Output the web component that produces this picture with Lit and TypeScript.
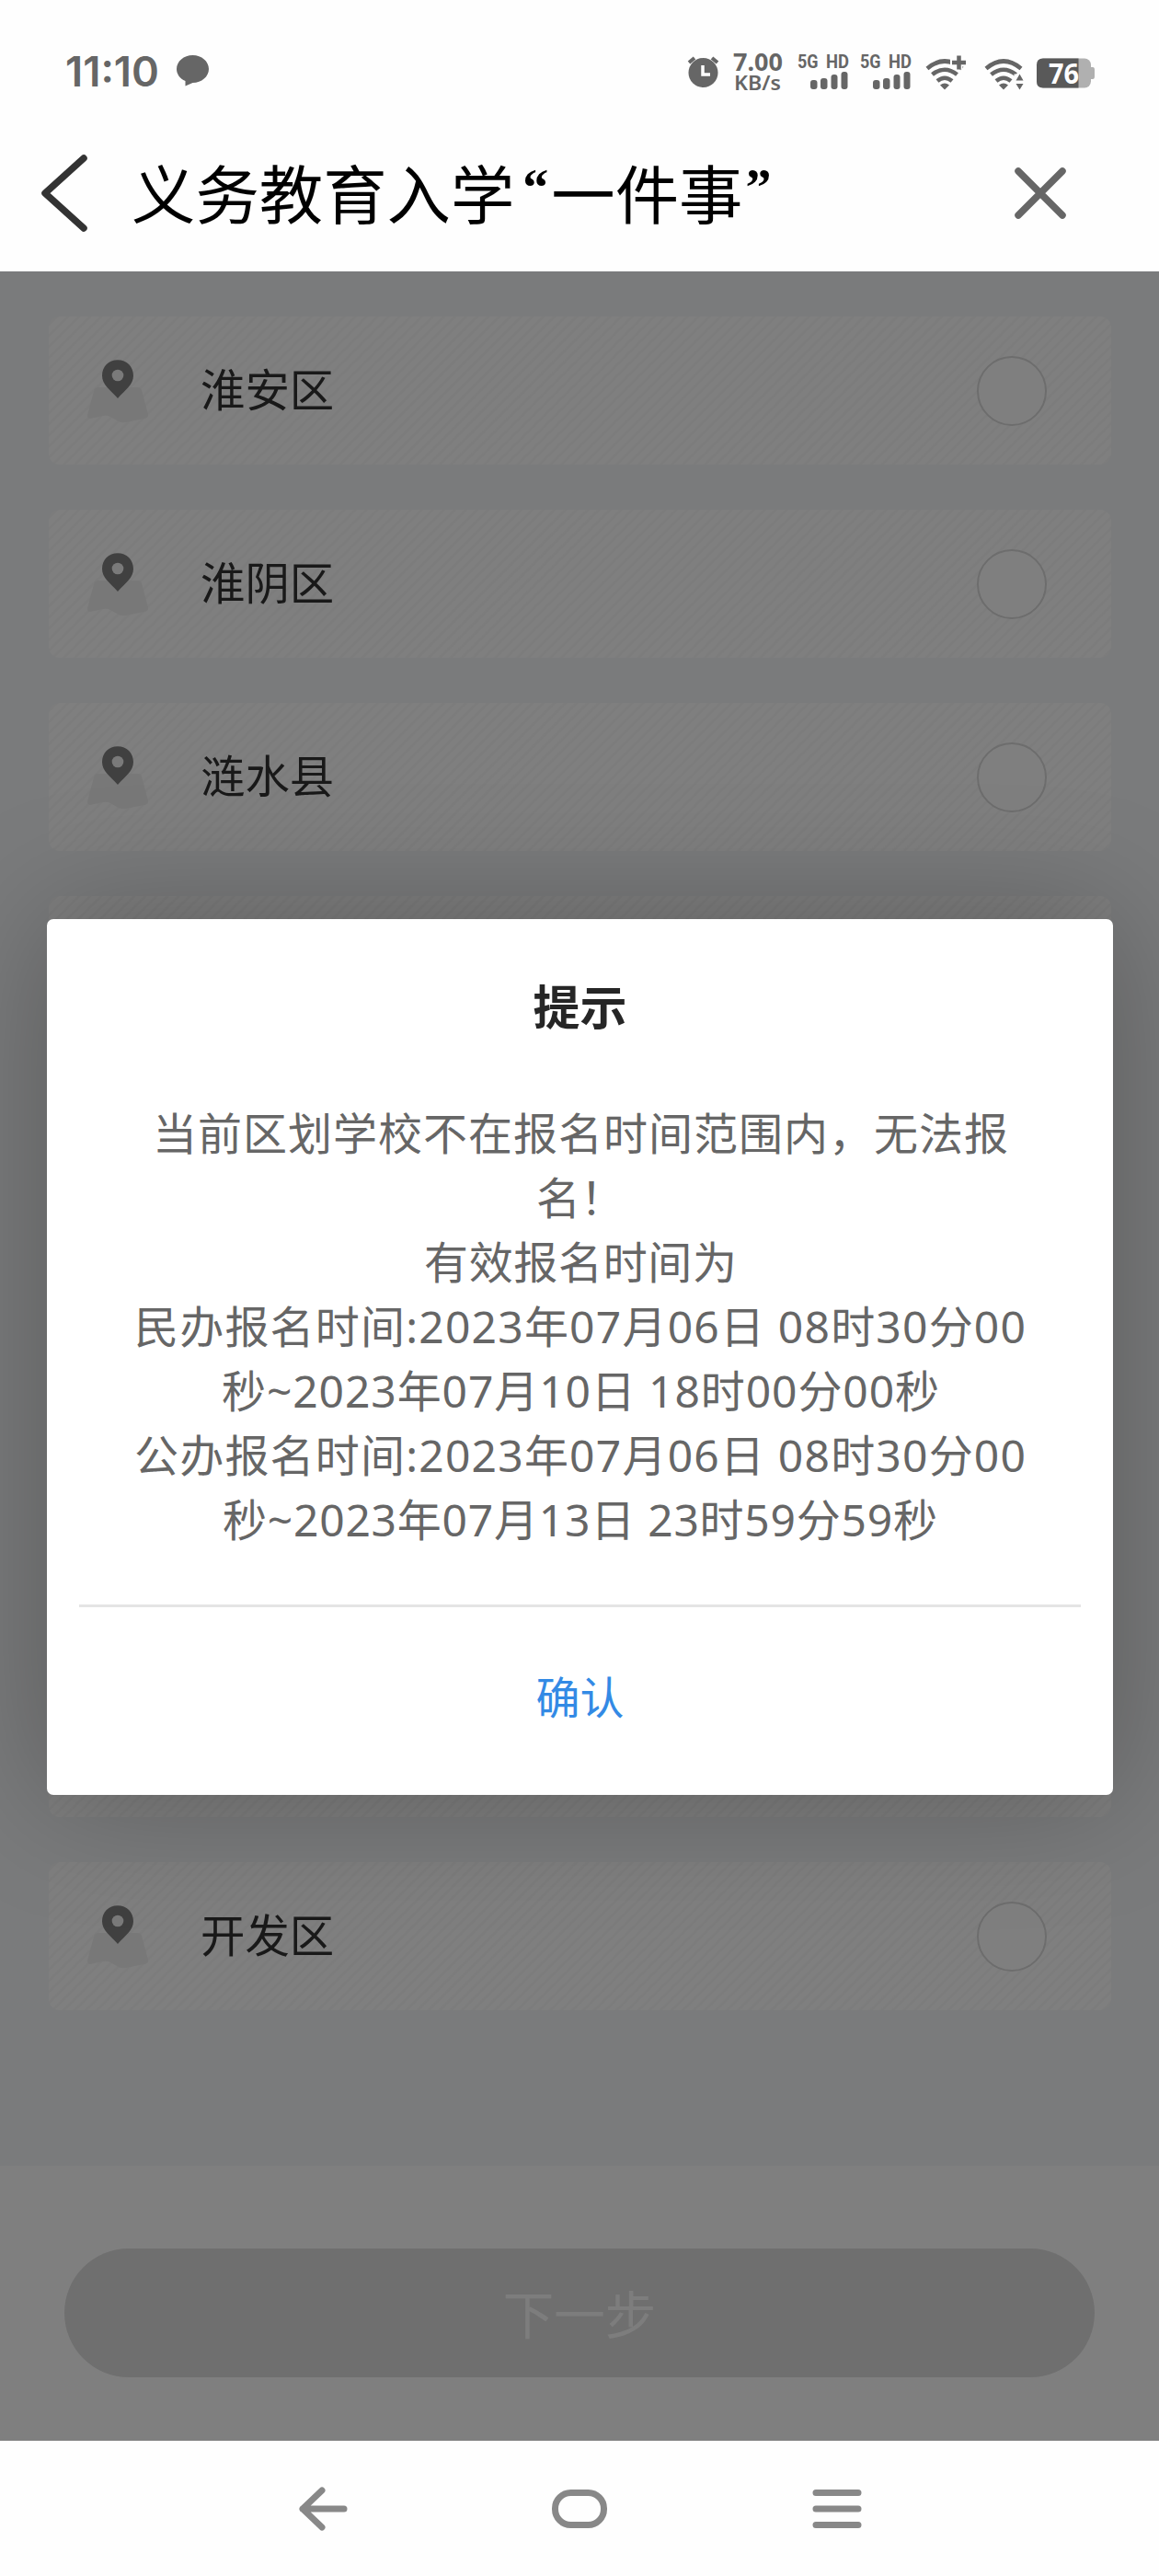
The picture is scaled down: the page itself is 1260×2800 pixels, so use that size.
import { LitElement, html, css, svg, nothing } from "lit";
import { customElement, property } from "lit/decorators.js";

const FONT = css`"Noto Sans", "Noto Sans CJK SC", sans-serif`;

@customElement("signal-meter")
class SignalMeter extends LitElement {
  static styles = css`
    :host { display: block; width: 58px; height: 42px; }
    .label { font: 700 21px/21px "Roboto", sans-serif; fill: #666; }
    svg { display: block; overflow: visible; }
  `;
  render() {
    return html`<svg width="58" height="42" viewBox="0 0 58 42" fill="#666">
      <text class="label" x="0" y="15.5" textLength="22.5" lengthAdjust="spacingAndGlyphs">5G</text>
      <text class="label" x="31" y="15.5" textLength="25" lengthAdjust="spacingAndGlyphs">HD</text>
      <rect x="14" y="29" width="7.5" height="10" rx="3" />
      <rect x="25" y="27" width="7.5" height="12" rx="3" />
      <rect x="36.5" y="23" width="7" height="16" rx="3" />
      <rect x="47.5" y="20" width="7" height="19" rx="3" />
    </svg>`;
  }
}

@customElement("district-row")
class DistrictRow extends LitElement {
  @property() name = "";
  static styles = css`
    :host { display: block; }
    .card {
      display: flex; align-items: center; box-sizing: border-box; height: 161px;
      padding: 0 70px 0 41px; border-radius: 12px;
      background: repeating-linear-gradient(135deg, #fff 0 4px, #f8f8f8 6px 7px, #fff 8.5px);
    }
    .pin { flex: none; width: 68px; height: 84px; margin-top: 4px; }
    .name {
      flex: 1; padding-left: 56px; white-space: nowrap; color: #333;
      font: 400 48.4px/60px ${FONT}; margin-top: -3px;
    }
    .radio { box-sizing: border-box; width: 76px; height: 76px; border: 2px solid #dadada; border-radius: 50%; background: #fff; }
  `;
  render() {
    return html`<div class="card">
      ${this.name
        ? html`<svg class="pin" viewBox="0 0 68 84">
              <path d="M12 36h44q3 0 4 3l7 26q1 4-4 5l-20 4q-6 1-10-2l-7-4q-4-2-8-1l-14 3q-3 0-3-4l7-26q1-4 4-4Z" fill="#f1f1f1" />
              <path d="M34 6.300C24.200 6.300 17 13.500 17 23.200c0 10 8.500 15 17 24.700 8.500-9.700 17-14.700 17-24.700C51 13.500 43.700 6.300 34 6.300Z" fill="#808080" />
              <circle cx="34" cy="23" r="6.300" fill="#f4f4f4" />
            </svg>
            <div class="name">${this.name}</div>
            <div class="radio"></div>`
        : nothing}
    </div>`;
  }
}

@customElement("app-root")
class AppRoot extends LitElement {
  // Rows without a name lie behind the dialog.
  private districts = ["淮安区", "淮阴区", "涟水县", "", "", "", "", "", "开发区"];

  static styles = css`
    :host { display: block; }
    .screen { display: flex; flex-direction: column; width: 1260px; height: 2800px; background: #fefefe; font-family: ${FONT}; }
    svg { display: block; overflow: visible; }

    .status { display: flex; align-items: center; justify-content: space-between; box-sizing: border-box; height: 156px; padding: 0 71px 0 70px; color: #666; }
    .left, .right { display: flex; align-items: center; }
    .clock-text { font: 600 44.5px "Inter", sans-serif; fill: #666; }
    .rate-big { font: 700 26px "Noto Sans", sans-serif; fill: #666; }
    .rate-small { font: 600 21px "Noto Sans", sans-serif; fill: #666; }
    .battery-text { font: 700 30px "Noto Sans", sans-serif; fill: #fff; }

    .header { display: flex; align-items: center; box-sizing: border-box; height: 139px; padding: 0 98px 30px 44px; }
    .title { flex: 1; margin: 0; padding-left: 47px; color: #000; font: 400 69.4px/100px ${FONT}; white-space: nowrap; }
    .quote { font: 700 56px/0 "Liberation Serif", serif; vertical-align: 15px; }
    .open { margin: 0 3px 0 9px; }
    .close { margin-left: 3px; }

    .page { position: relative; display: flex; flex-direction: column; height: 2358px; }
    .list { box-sizing: border-box; height: 2059px; padding: 49px 52px 0 53px; background: #f4f6f8; display: flex; flex-direction: column; gap: 49px; }
    .footer { box-sizing: border-box; height: 299px; padding: 90px 70px 0; background: #fff; }
    .next { display: block; width: 100%; height: 140px; border: 0; border-radius: 70px; background: #dfdfdf; color: #fbfbfb; font: 400 55.5px/144px ${FONT}; padding: 0; }

    .overlay { position: absolute; inset: 0; overflow: hidden; background: rgba(0, 0, 0, 0.5); }
    .dialog {
      box-sizing: border-box; width: 1159px; height: 952px; margin: 704px 0 0 51px; padding: 60px 35px 0;
      border-radius: 7px; background: #fff; box-shadow: 0 0 140px rgba(0, 0, 0, 0.27);
      display: flex; flex-direction: column; text-align: center;
    }
    .dialog-title { margin: 0; height: 72px; font: 700 51px/71px ${FONT}; color: #262626; }
    .message { height: 490px; margin-top: 68px; color: #666; font-size: 48px; line-height: 70px; white-space: nowrap; }
    .line { display: flex; justify-content: center; height: 70px; }
    .divider { flex: none; height: 3px; margin-top: 55px; background: #e5e5e5; }
    .confirm { border: 0; background: none; padding: 0; height: 196px; color: #338ae5; font: 400 48px/196px ${FONT}; }

    .nav { display: grid; grid-template-columns: repeat(3, 280px); justify-content: center; height: 147px; align-items: center; justify-items: center; }
  `;

  private line(text: string, width: number) {
    return html`<div class="line"><svg width=${width} height="70">
      <text x="0" y="51" textLength=${width} fill="#666">${text}</text></svg></div>`;
  }

  private wifi() {
    return svg`<path d="M2 14Q21-2 40 14M7.500 20.500Q21 10 34.500 20.500M13 27.500Q21 21 29 27.500" fill="none" stroke="#666" stroke-width="4.600" />
      <path d="M16 32Q21 28 26 32L21 37Z" fill="#666" />`;
  }

  render() {
    return html`<div class="screen">
      <div class="status">
        <div class="left">
          <svg width="140" height="50" viewBox="0 0 140 50">
            <text class="clock-text" x="1" y="40.500" textLength="102" lengthAdjust="spacingAndGlyphs">11:10</text>
            <path d="M139.500 7c9.700 0 17.500 6.700 17.500 15s-7.800 15-17.500 15l-8 3.500v-5.500c-6-2.500-9.500-7.500-9.500-13 0-8.300 7.800-15 17.500-15Z" fill="#666" />
          </svg>
        </div>
        <div class="right">
          <svg width="442" height="44" viewBox="747 56 442 44">
            <circle cx="764.500" cy="79" r="16" fill="#666" />
            <path d="M749 68l6-5M780 68l-6-5" stroke="#666" stroke-width="4" />
            <path d="M764 71v10h8" fill="none" stroke="#fff" stroke-width="3.500" />
            <text class="rate-big" x="797" y="77" textLength="54" lengthAdjust="spacingAndGlyphs">7.00</text>
            <text class="rate-small" x="798" y="97.500" textLength="51" lengthAdjust="spacingAndGlyphs">KB/s</text>
            <g transform="translate(1006 60.500)">${this.wifi()}<path d="M36-2v17M27 7h15" stroke="#fefefe" stroke-width="9" /><path d="M36.500 0v15M29 7.500h15" stroke="#666" stroke-width="4.500" /></g>
            <g transform="translate(1070 60.500)">${this.wifi()}<path d="M32.500 20h12v18h-12Z" fill="#fefefe" /><path d="M34.500 27l4-7 4 7ZM34.500 30.500l4 6.500 4-6.500Z" fill="#666" /></g>
            <rect x="1127" y="63.500" width="59" height="32" rx="7" fill="#b0b0b0" />
            <path d="M1186 73h2q2 0 2 3v7q0 3-2 3h-2Z" fill="#b0b0b0" />
            <path d="M1134 63.500h38.500v32H1134q-7 0-7-7v-18q0-7 7-7Z" fill="#595959" />
            <text class="battery-text" x="1140" y="90.500" textLength="33" lengthAdjust="spacingAndGlyphs">76</text>
            <foreignObject x="867" y="58" width="58" height="42"><signal-meter></signal-meter></foreignObject>
            <foreignObject x="935" y="58" width="58" height="42"><signal-meter></signal-meter></foreignObject>
          </svg>
        </div>
      </div>
      <header class="header">
        <svg width="52" height="84" viewBox="0 0 52 84"><path d="M47 3L5 41l42 38" fill="none" stroke="#333" stroke-width="7.500" stroke-linecap="round" stroke-linejoin="round" /></svg>
        <h1 class="title">义务教育入学<span class="quote open">“</span>一件事<span class="quote close">”</span></h1>
        <svg width="62" height="56" viewBox="0 0 62 56"><path d="M7 3L55 51M55 3L7 51" stroke="#666" stroke-width="7.500" stroke-linecap="round" /></svg>
      </header>
      <main class="page">
        <div class="list">${this.districts.map((d) => html`<district-row .name=${d}></district-row>`)}</div>
        <div class="footer"><button class="next">下一步</button></div>
        <div class="overlay">
          <section class="dialog">
            <h2 class="dialog-title">提示</h2>
            <div class="message">
              ${this.line("当前区划学校不在报名时间范围内，无法报", 930)}
              ${this.line("名！", 96)}
              ${this.line("有效报名时间为", 340)}
              ${this.line("民办报名时间:2023年07月06日 08时30分00", 969)}
              ${this.line("秒~2023年07月10日 18时00分00秒", 780)}
              ${this.line("公办报名时间:2023年07月06日 08时30分00", 969)}
              ${this.line("秒~2023年07月13日 23时59分59秒", 777)}
            </div>
            <div class="divider"></div>
            <button class="confirm">确认</button>
          </section>
        </div>
      </main>
      <nav class="nav">
        <svg width="54" height="48" viewBox="0 0 54 48" fill="none" stroke="#888" stroke-width="7" stroke-linecap="round" stroke-linejoin="round"><path d="M27 4L6 24l21 20M6 24h45" /></svg>
        <svg width="60" height="42" viewBox="0 0 60 42"><rect x="3.500" y="3.500" width="53" height="35" rx="17" fill="none" stroke="#888" stroke-width="7" /></svg>
        <svg width="54" height="42" viewBox="0 0 54 42" stroke="#888" stroke-width="7" stroke-linecap="round"><path d="M4 3.500h46M4 21h46M4 38.500h46" /></svg>
      </nav>
    </div>`;
  }
}
